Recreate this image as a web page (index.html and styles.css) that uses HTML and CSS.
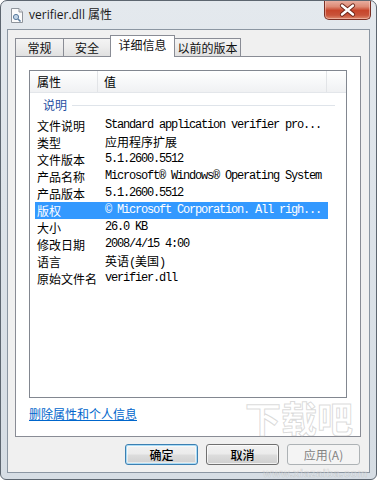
FILE: index.html
```html
<!DOCTYPE html>
<html lang="zh-CN">
<head>
<meta charset="utf-8">
<title>verifier.dll 属性</title>
<link rel="stylesheet" href="styles.css">
</head>
<body>
<div class="window">
  <div class="titlebar">
    <svg class="appicon" width="14" height="15" viewBox="0 0 14 15">
      <path d="M1.5 0.5 H9 L12.5 4 V14.5 H1.5 Z" fill="#fbfbfb" stroke="#8f959c"/>
      <path d="M9 0.5 V4 H12.5" fill="#e4e6e9" stroke="#8f959c"/>
      <circle cx="6" cy="9" r="2.6" fill="#bfd3e6" stroke="#5b7c9e"/>
      <path d="M8 11 L10.5 13.5" stroke="#5b7c9e" stroke-width="1.6"/>
    </svg>
    <span class="title">verifier.dll 属性</span>
    <div class="close">
      <svg width="45" height="18" viewBox="0 0 45 18">
        <path d="M17 4.5 L28 13.5 M28 4.5 L17 13.5" stroke="#6b2418" stroke-width="4.2" stroke-linecap="round"/>
        <path d="M17 4.5 L28 13.5 M28 4.5 L17 13.5" stroke="#ffffff" stroke-width="2.4" stroke-linecap="round"/>
      </svg>
    </div>
  </div>
  <div class="client">
    <div class="tabs">
      <div class="tab t1">常规</div>
      <div class="tab t2">安全</div>
      <div class="tab active">详细信息</div>
      <div class="tab t4">以前的版本</div>
    </div>
    <div class="panel">
      <div class="list">
        <div class="head">
          <div class="hc1">属性</div>
          <div class="hc2">值</div>
          <div class="hc3"></div>
        </div>
        <div class="group"><span>说明</span><i></i></div>
        <div class="row"><span class="k">文件说明</span><span class="v">Standard application verifier pro...</span></div>
        <div class="row"><span class="k">类型</span><span class="v"><span class="cjk">应用程序扩展</span></span></div>
        <div class="row"><span class="k">文件版本</span><span class="v">5.1.2600.5512</span></div>
        <div class="row"><span class="k">产品名称</span><span class="v">Microsoft® Windows® Operating System</span></div>
        <div class="row"><span class="k">产品版本</span><span class="v">5.1.2600.5512</span></div>
        <div class="row sel"><span class="k">版权</span><span class="v">© Microsoft Corporation. All righ...</span></div>
        <div class="row"><span class="k">大小</span><span class="v">26.0 KB</span></div>
        <div class="row"><span class="k">修改日期</span><span class="v">2008/4/15 4:00</span></div>
        <div class="row"><span class="k">语言</span><span class="v"><span class="cjk">英语</span>(<span class="cjk">美国</span>)</span></div>
        <div class="row"><span class="k">原始文件名</span><span class="v">verifier.dll</span></div>
      </div>
      <a class="link" href="#">删除属性和个人信息</a>
    </div>
    <div class="buttons">
      <div class="btn default">确定</div>
      <div class="btn">取消</div>
      <div class="btn disabled">应用(A)</div>
    </div>
  </div>
  <div class="watermark">下载吧</div>
  <div class="watermark-url">www.xiazaiba.com</div>
</div>
</body>
</html>
```

FILE: styles.css
```css
html, body {
  margin: 0;
  padding: 0;
  background: #ffffff;
}

body {
  width: 377px;
  height: 480px;
  overflow: hidden;
  font-family: "Noto Sans CJK SC", "Liberation Sans", sans-serif;
  font-size: 12px;
  color: #000;
}

.window {
  position: relative;
  width: 377px;
  height: 480px;
  box-sizing: border-box;
  border: 1px solid #5d6670;
  border-radius: 7px 7px 6px 6px;
  background: linear-gradient(180deg, #e4e9ee 0%, #dde3e9 40%, #d6dde4 100%);
  overflow: hidden;
}

.titlebar {
  display: flex;
  align-items: flex-start;
  height: 28px;
}

.appicon {
  margin: 7px 0 0 9px;
  flex: none;
}

.title {
  margin: 6px 0 0 5px;
  font-family: "Open Sans", "Noto Sans", "Noto Sans CJK SC", sans-serif;
  font-size: 12px;
  line-height: 16px;
  color: #1a1a1a;
}

.close {
  margin-left: auto;
  margin-right: 5px;
  margin-top: -1px;
  width: 47px;
  height: 20px;
  box-sizing: border-box;
  border: 1px solid #7a2f24;
  border-top: none;
  border-radius: 0 0 5px 5px;
  background: linear-gradient(180deg, #eab3a6 0%, #dd8a75 35%, #c7452b 55%, #c9533a 80%, #de8b6f 100%);
  box-shadow: inset 0 0 0 1px rgba(255, 220, 210, 0.45);
  display: flex;
  align-items: center;
  justify-content: center;
}

.client {
  margin: 0 6px;
  height: 444px;
  box-sizing: border-box;
  border: 1px solid #8b96a2;
  background: #f0f0f0;
  padding: 5px 8px 0 7px;
}

.tabs {
  display: flex;
  align-items: flex-end;
  height: 22px;
  margin-bottom: -1px;
  position: relative;
  z-index: 1;
}

.tab {
  box-sizing: border-box;
  height: 18px;
  margin-bottom: 1px;
  margin-right: -1px;
  border: 1px solid #898c95;
  border-bottom: none;
  background: linear-gradient(180deg, #f4f4f4 0%, #ececec 50%, #e0e0e0 100%);
  display: flex;
  align-items: center;
  justify-content: center;
  font-size: 12px;
  line-height: 16px;
  padding-top: 1px;
  color: #111;
}

.t1 { width: 49px; }
.t2 { width: 48px; }
.t4 { width: 67px; }

.tab.active {
  width: 65px;
  height: 22px;
  margin-bottom: 0;
  background: #ffffff;
  position: relative;
  z-index: 2;
  padding-top: 0;
  padding-bottom: 3px;
}

.panel {
  height: 381px;
  box-sizing: border-box;
  border: 1px solid #898c95;
  background: #ffffff;
  padding: 13px 13px 0 13px;
  display: flex;
  flex-direction: column;
  align-items: flex-start;
}

.list {
  align-self: stretch;
  height: 328px;
  box-sizing: border-box;
  border: 1px solid #828790;
  background: #ffffff;
}

.head {
  display: flex;
  height: 22px;
  box-sizing: border-box;
  border-bottom: 1px solid #e3e6ea;
  background: linear-gradient(180deg, #ffffff 0%, #f7f8f9 50%, #f0f1f3 100%);
  line-height: 21px;
}

.hc1 {
  width: 68px;
  box-sizing: border-box;
  border-right: 1px solid #e2e4e7;
  padding-left: 7px;
}

.hc2 {
  width: 229px;
  box-sizing: border-box;
  border-right: 1px solid #e2e4e7;
  padding-left: 6px;
}

.hc3 {
  flex: 1;
}

.group {
  height: 24px;
  display: flex;
  align-items: center;
  padding-left: 13px;
  padding-right: 11px;
  color: #1e4fa3;
}

.group span {
  line-height: 16px;
}

.group i {
  flex: 1;
  height: 1px;
  margin-left: 5px;
  background: #dfe4ea;
}

.row {
  display: flex;
  align-items: center;
  height: 17px;
  width: 293px;
  margin-left: 5px;
  line-height: 17px;
  white-space: nowrap;
}

.row.sel {
  background: #3399ff;
  color: #ffffff;
}

.k {
  width: 70px;
  box-sizing: border-box;
  padding-left: 2px;
  flex: none;
}

.v {
  font-family: "Liberation Mono", "Noto Sans CJK SC", monospace;
  font-size: 12px;
  letter-spacing: -1.2px;
}

.cjk {
  font-family: "Noto Sans CJK SC", sans-serif;
  letter-spacing: 0;
}

.link {
  margin-top: 8px;
  line-height: 16px;
  color: #0066cc;
  text-decoration: underline;
  font-size: 12px;
}

.buttons {
  display: flex;
  justify-content: flex-end;
  gap: 8px;
  margin-top: 7px;
  padding-right: 1px;
}

.btn {
  width: 73px;
  height: 21px;
  box-sizing: border-box;
  border: 1px solid #707070;
  border-radius: 3px;
  background: linear-gradient(180deg, #f2f2f2 0%, #ebebeb 48%, #dddddd 52%, #cfcfcf 100%);
  box-shadow: inset 0 0 0 1px rgba(255, 255, 255, 0.7);
  display: flex;
  align-items: center;
  justify-content: center;
  font-size: 12px;
  line-height: 16px;
  font-weight: 500;
}

.btn.default {
  border-color: #3c7fb1;
  box-shadow: inset 0 0 0 1px #a9dcf7, inset 0 0 0 2px rgba(255, 255, 255, 0.5);
}

.btn.disabled {
  border-color: #adb2b5;
  background: #f4f4f4;
  box-shadow: none;
  color: #838383;
  font-weight: 400;
}

.watermark {
  position: absolute;
  left: 244px;
  top: 398px;
  font-family: "Noto Sans CJK SC", sans-serif;
  font-size: 36px;
  line-height: 36px;
  height: 36px;
  font-weight: 700;
  color: rgba(255, 255, 255, 0.35);
  -webkit-text-stroke: 1px rgba(150, 150, 150, 0.35);
  pointer-events: none;
}

.watermark-url {
  position: absolute;
  left: 262px;
  top: 466px;
  font-family: "Liberation Sans", sans-serif;
  font-size: 11px;
  line-height: 12px;
  font-weight: 700;
  color: rgba(255, 255, 255, 0.3);
  -webkit-text-stroke: 0.6px rgba(150, 150, 150, 0.3);
  letter-spacing: 0.5px;
  pointer-events: none;
}
```
